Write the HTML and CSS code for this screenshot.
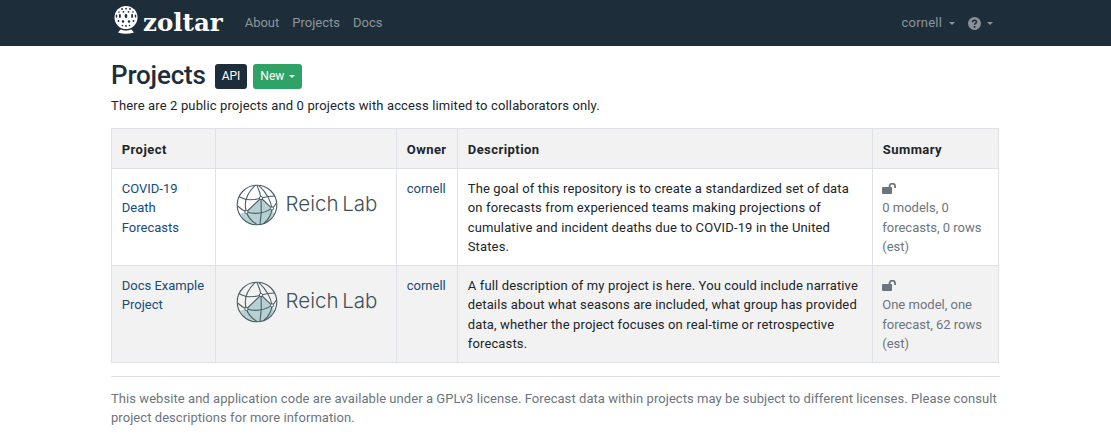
FILE: index.html
```html
<!DOCTYPE html>
<html lang="en">
<head>
    <meta charset="UTF-8">
    <title>Projects - Zoltar</title>
    <link rel="stylesheet" href="styles.css">
</head>
<body>
    <nav class="navbar">
        <div class="navInner">
            <a class="brand">
                <svg class="brandIcon" width="24" height="28" viewBox="0 0 24 28">
                    <circle cx="12" cy="11.5" r="11.5" fill="#fff"/>
                    <g fill="#1d2d3a">
                        <circle cx="8" cy="3" r="0.9"/><circle cx="12" cy="2.6" r="0.9"/><circle cx="16" cy="3" r="0.9"/>
                        <circle cx="5" cy="6" r="0.8"/><circle cx="9.5" cy="5.8" r="0.9"/><circle cx="14.5" cy="5.8" r="0.9"/><circle cx="19" cy="6" r="0.8"/>
                        <rect x="1.8" y="8.4" width="1.4" height="3.2" rx="0.7"/><rect x="5" y="8" width="1.8" height="4" rx="0.9"/><rect x="10.8" y="8" width="2.4" height="4" rx="1.2"/><rect x="17.2" y="8" width="1.8" height="4" rx="0.9"/><rect x="20.8" y="8.4" width="1.4" height="3.2" rx="0.7"/>
                        <circle cx="4.5" cy="15" r="0.9"/><circle cx="9" cy="15.5" r="1.2"/><circle cx="15" cy="15.5" r="1.2"/><circle cx="19.5" cy="15" r="0.9"/>
                        <circle cx="8.5" cy="19.5" r="0.8"/><circle cx="12" cy="20" r="0.9"/><circle cx="15.5" cy="19.5" r="0.8"/>
                    </g>
                    <path d="M6.5 23.6Q12 25.6 17.5 23.6L20 26.6Q12 29 4 26.6Z" fill="#fff"/>
                </svg>
                <span class="brandName">zoltar</span>
            </a>
            <a class="navLink">About</a>
            <a class="navLink">Projects</a>
            <a class="navLink">Docs</a>
            <div class="navRight">
                <a class="navLink caret userLink">cornell</a>
                <a class="navLink caret helpLink">
                    <svg width="13" height="13" viewBox="0 0 13 13">
                        <circle cx="6.5" cy="6.5" r="6.5" fill="#8a9299"/>
                        <path d="M4.5 5.2c0-1.2 1-1.9 2-1.9s2 .7 2 1.7c0 1.4-1.9 1.4-1.9 2.7" fill="none" stroke="#1d2d3a" stroke-width="1.6"/>
                        <rect x="5.7" y="9" width="1.7" height="1.7" fill="#1d2d3a"/>
                    </svg>
                </a>
            </div>
        </div>
    </nav>

    <main class="container">
        <div class="pageHead">
            <h2 class="pageTitle">Projects</h2>
            <a class="btn btnDark">API</a>
            <a class="btn btnGreen caret">New</a>
        </div>
        <p class="intro">There are 2 public projects and 0 projects with access limited to collaborators only.</p>

        <table class="projectTable">
            <thead>
                <tr>
                    <th class="colName">Project</th>
                    <th class="colLogo"></th>
                    <th class="colOwner">Owner</th>
                    <th class="colDesc">Description</th>
                    <th class="colSummary">Summary</th>
                </tr>
            </thead>
            <tbody>
                <tr>
                    <td><a>COVID-19 Death Forecasts</a></td>
                    <td class="logoCell">
                        <div class="reichLogo">
                            <svg width="42" height="42" viewBox="0 0 42 42">
                                <path d="M25 14L36 24.4 38 30A19.5 19.5 0 0 1 4 30L10.4 28Z" fill="#b7d0d3"/>
                                <g fill="none" stroke="#4b5f66" stroke-width="1.1">
                                    <circle cx="21" cy="21" r="19.8"/>
                                    <path d="M19 1.6Q6 14 10.4 28Q13 36 21 40.4"/>
                                    <path d="M23 1.6Q34 12 36 24.4Q35 34 28 39"/>
                                    <path d="M21 1.5Q24 8 25 14Q26 28 24 40.6"/>
                                    <path d="M3.5 13Q13 18 25 14Q33 12 38.5 12"/>
                                    <path d="M1.6 22Q6 26 10.4 28Q24 32 36 24.4Q38 23 40.4 19"/>
                                    <path d="M25 14L10.4 28"/>
                                    <path d="M25 14L36 24.4"/>
                                </g>
                                <circle cx="25" cy="14" r="1.6" fill="#fff" stroke="#4b5f66"/>
                                <circle cx="36" cy="24.4" r="1.6" fill="#fff" stroke="#4b5f66"/>
                                <circle cx="10.4" cy="28" r="1.6" fill="#fff" stroke="#4b5f66"/>
                            </svg>
                            <span class="reichText">Reich Lab</span>
                        </div>
                    </td>
                    <td><a>cornell</a></td>
                    <td class="descCell">The goal of this repository is to create a standardized set of data on forecasts from experienced teams making projections of cumulative and incident deaths due to COVID-19 in the United States.</td>
                    <td class="summary">
                        <div class="lockRow">
                            <svg width="15" height="11" viewBox="0 0 15 11">
                                <rect x="0" y="4" width="10" height="7" rx="1" fill="#6c757d"/>
                                <path d="M7.5 4.5V3.4a2.8 2.8 0 0 1 5.6 0V5" fill="none" stroke="#6c757d" stroke-width="1.8"/>
                            </svg>
                        </div>
                        <div>0 models, 0 forecasts, 0 rows (est)</div>
                    </td>
                </tr>
                <tr class="altRow">
                    <td><a>Docs Example Project</a></td>
                    <td class="logoCell">
                        <div class="reichLogo">
                            <svg width="42" height="42" viewBox="0 0 42 42">
                                <path d="M25 14L36 24.4 38 30A19.5 19.5 0 0 1 4 30L10.4 28Z" fill="#b7d0d3"/>
                                <g fill="none" stroke="#4b5f66" stroke-width="1.1">
                                    <circle cx="21" cy="21" r="19.8"/>
                                    <path d="M19 1.6Q6 14 10.4 28Q13 36 21 40.4"/>
                                    <path d="M23 1.6Q34 12 36 24.4Q35 34 28 39"/>
                                    <path d="M21 1.5Q24 8 25 14Q26 28 24 40.6"/>
                                    <path d="M3.5 13Q13 18 25 14Q33 12 38.5 12"/>
                                    <path d="M1.6 22Q6 26 10.4 28Q24 32 36 24.4Q38 23 40.4 19"/>
                                    <path d="M25 14L10.4 28"/>
                                    <path d="M25 14L36 24.4"/>
                                </g>
                                <circle cx="25" cy="14" r="1.6" fill="#fff" stroke="#4b5f66"/>
                                <circle cx="36" cy="24.4" r="1.6" fill="#fff" stroke="#4b5f66"/>
                                <circle cx="10.4" cy="28" r="1.6" fill="#fff" stroke="#4b5f66"/>
                            </svg>
                            <span class="reichText">Reich Lab</span>
                        </div>
                    </td>
                    <td><a>cornell</a></td>
                    <td class="descCell">A full description of my project is here. You could include narrative details about what seasons are included, what group has provided data, whether the project focuses on real-time or retrospective forecasts.</td>
                    <td class="summary">
                        <div class="lockRow">
                            <svg width="15" height="11" viewBox="0 0 15 11">
                                <rect x="0" y="4" width="10" height="7" rx="1" fill="#6c757d"/>
                                <path d="M7.5 4.5V3.4a2.8 2.8 0 0 1 5.6 0V5" fill="none" stroke="#6c757d" stroke-width="1.8"/>
                            </svg>
                        </div>
                        <div>One model, one forecast, 62 rows (est)</div>
                    </td>
                </tr>
            </tbody>
        </table>

        <hr class="rule">
        <p class="footerText">This website and application code are available under a GPLv3 license. Forecast data within projects may be subject to different licenses. Please consult project descriptions for more information.</p>
    </main>
</body>
</html>
```

FILE: styles.css
```css
* {
    box-sizing: border-box;
}
body {
    margin: 0;
    font-family: Roboto, sans-serif;
    font-size: 13px;
    line-height: 1.5;
    color: #212529;
    background: #fff;
}
a {
    color: #154c79;
    text-decoration: none;
}
.navbar {
    height: 46px;
    background: #1d2d3a;
}
.navInner {
    width: 889px;
    height: 46px;
    margin: 0 auto;
    display: flex;
    align-items: center;
}
.brand {
    display: flex;
    align-items: center;
    gap: 5px;
    margin: 0 22px 0 3px;
}
.brandIcon {
    margin-bottom: 6px;
}
.brandName {
    font-family: "DejaVu Serif", serif;
    font-weight: bold;
    font-size: 24.5px;
    line-height: 30px;
    color: #fff;
}
.navLink {
    color: #8d959b;
    margin-right: 13px;
}
.navRight {
    margin-left: auto;
    display: flex;
    align-items: center;
}
.navRight .navLink {
    margin-right: 13px;
}
.navRight .userLink {
    letter-spacing: 0.2px;
}
.navRight .helpLink {
    display: flex;
    align-items: center;
    margin-right: 7px;
}
.caret::after {
    content: "";
    display: inline-block;
    margin-left: 6px;
    vertical-align: 2px;
    border-top: 3.5px solid;
    border-left: 3.5px solid transparent;
    border-right: 3.5px solid transparent;
}
.userLink::after {
    margin-left: 7px;
}
.container {
    width: 889px;
    margin: 0 auto;
}
.pageHead {
    display: flex;
    align-items: center;
    gap: 6px;
    padding-top: 13px;
}
.pageTitle {
    margin: 0 3px 2px 0;
    font-size: 26px;
    line-height: 32px;
    font-weight: 500;
    letter-spacing: -0.2px;
    color: #1d2d3a;
}
.btn {
    height: 25px;
    padding: 0 7px;
    font-size: 12px;
    line-height: 25px;
    color: #fff;
    border-radius: 3px;
}
.btn.caret::after {
    margin-left: 5px;
}
.btnDark {
    background: #1d2d3a;
}
.btnGreen {
    background: #2fa265;
}
.intro {
    margin: 3px 0 12px;
    letter-spacing: 0.14px;
}
.projectTable {
    width: 888px;
    border-collapse: collapse;
    table-layout: fixed;
}
.projectTable th,
.projectTable td {
    border: 1px solid #dee2e6;
    padding: 10.25px 9.75px 7.75px;
    text-align: left;
    vertical-align: top;
}
.projectTable th {
    padding: 11px 9.75px 8.5px;
    font-weight: 700;
    letter-spacing: 0.45px;
    background: #f2f2f2;
}
.colName { width: 104px; }
.colLogo { width: 181px; }
.colOwner { width: 61px; }
.colDesc { width: 415px; }
.altRow td {
    background: #f2f2f2;
}
.projectTable .logoCell {
    padding: 15px 9.75px 0;
}
.reichLogo {
    display: flex;
    align-items: center;
    justify-content: center;
    gap: 8px;
    padding-left: 1px;
}
.reichText {
    font-family: Inter, sans-serif;
    font-weight: 300;
    font-size: 20.5px;
    word-spacing: -2px;
    color: #3d5159;
    white-space: nowrap;
}
.descCell {
    letter-spacing: 0.14px;
}
.projectTable .summary {
    padding-left: 9.25px;
    color: #6c757d;
}
.lockRow {
    height: 19.5px;
    display: flex;
    align-items: center;
}
.rule {
    margin: 13px 0 12px;
    border: 0;
    border-top: 1px solid #dedede;
}
.footerText {
    margin: 0;
    letter-spacing: 0.06px;
    color: #6c757d;
}
```
